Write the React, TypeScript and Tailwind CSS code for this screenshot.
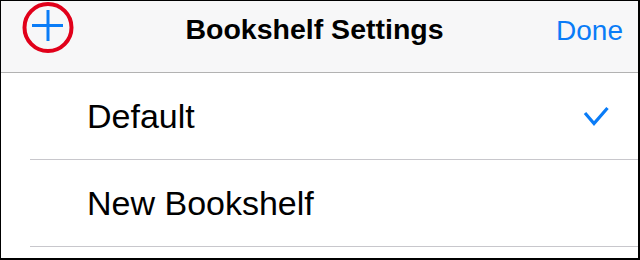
import React from "react";

const shelves = [
  { name: "Default", selected: true },
  { name: "New Bookshelf", selected: false },
];

/** Little nav bar with the add button ringed in red, plus the shelf list. */
export default function App() {
  return (
    <div
      className="box-border h-[260px] w-[640px] overflow-hidden border-t border-l border-r-2 border-b-2 border-black bg-white text-black"
      style={{ fontFamily: '"Liberation Sans", Arial, Helvetica, sans-serif' }}
    >
      <header className="grid h-[72px] grid-cols-[1fr_auto_1fr] items-start border-b border-[#b2b2b2] bg-[#f7f7f8]">
        <div className="flex">
          <svg width="54" height="54" viewBox="0 0 54 54" className="ml-[20px]">
            <circle cx="27" cy="26.5" r="23.5" fill="none" stroke="#e1001a" strokeWidth="4" />
            <path d="M11 24.5H42M27 9V40" stroke="#0a7cf7" strokeWidth="3" />
          </svg>
        </div>
        <h1 className="mt-[14px] mr-[10px] text-[28.5px] leading-none font-bold">
          Bookshelf Settings
        </h1>
        <div className="flex justify-end">
          <button className="mt-[16px] pr-[15px] text-[28px] leading-none text-[#0a7cf7]">
            Done
          </button>
        </div>
      </header>

      <ul className="pl-[29px]">
        {shelves.map((s) => (
          <li
            key={s.name}
            className="flex h-[87px] items-center justify-between border-b border-[#c8c7cc] pl-[57px] pr-[28px]"
          >
            <span className="text-[34px] leading-none">{s.name}</span>
            {s.selected && (
              <svg width="27" height="22" viewBox="0 0 27 22">
                <polyline
                  points="2,8 11,18.5 24.5,3"
                  fill="none"
                  stroke="#0a7cf7"
                  strokeWidth="3.2"
                />
              </svg>
            )}
          </li>
        ))}
      </ul>
    </div>
  );
}
